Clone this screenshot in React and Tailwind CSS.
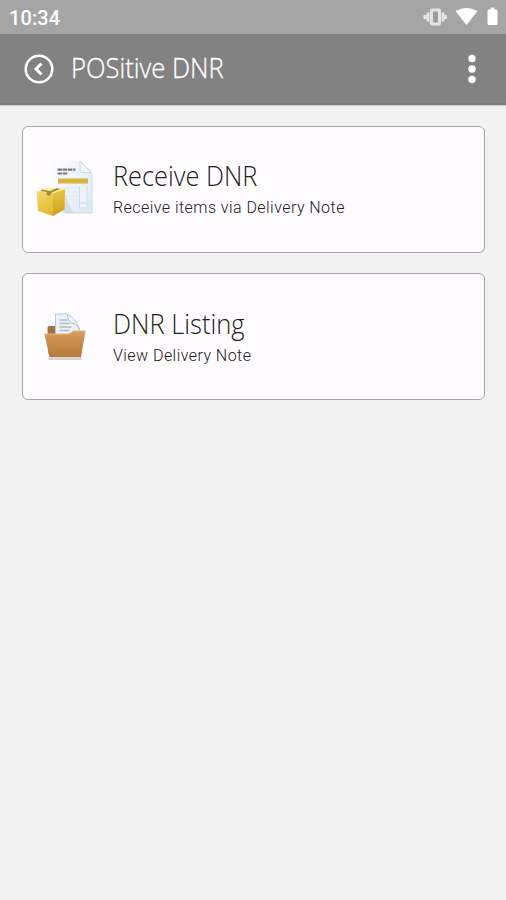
import React from "react";

function StatusBar() {
  return (
    <div className="flex h-[34px] items-center justify-between bg-[#a5a5a5] pl-[9px] pr-[7px] text-white">
      <span className="pt-px font-['Roboto',sans-serif] text-[20px] font-medium leading-6 tracking-[0.1px]">10:34</span>
      <svg width="76" height="22" viewBox="0 0 76 22" fill="none" className="-mt-px">
        <g fill="#e4e4e4">
          <rect x="7" y="2.500" width="11" height="17" rx="2" />
          <path d="M3.500 6.500H6.500v9H3.500zM18.500 6.500h3v9h-3zM.5 9h3v4H.5zM21.500 9h2.500v4h-2.500z" />
          <rect x="10" y="5.500" width="5" height="11" fill="#9c9c9c" />
        </g>
        <path d="M32.500 5Q43.500-1 54.500 5L43.500 19z" fill="white" />
        <path d="M67.500 1.500h4v2h1.500q1.500 0 1.500 1.500v12.500q0 1.500-1.500 1.500h-7q-1.500 0-1.500-1.500V5q0-1.500 1.500-1.500h1.500z" fill="white" />
      </svg>
    </div>
  );
}

function Header() {
  return (
    <header className="flex h-[71px] items-center border-b-2 border-[#7b7b7b] bg-[#828282] pl-6 pr-[29px] shadow-[0_1px_1px_#d0d0d0]">
      <svg width="30" height="30" viewBox="0 0 30 30" fill="none" stroke="white" className="shrink-0">
        <circle cx="15" cy="15" r="13.300" strokeWidth="2.500" />
        <path d="M17.500 9.500L12 15l5.500 5.500" strokeWidth="3" />
      </svg>
      <h1 className="mb-0.5 ml-[17px] flex-1 origin-left scale-x-[0.93] whitespace-nowrap font-['Open_Sans',sans-serif] text-[27.500px] font-light leading-9 text-white [-webkit-text-stroke:0.3px_white]">
        POSitive DNR
      </h1>
      <svg width="10" height="30" viewBox="0 0 10 30" fill="white" className="shrink-0">
        <circle cx="5" cy="4.500" r="3.700" />
        <circle cx="5" cy="15" r="3.700" />
        <circle cx="5" cy="25.500" r="3.700" />
      </svg>
    </header>
  );
}

function DeliveryIcon() {
  return (
    <svg width="60" height="60" viewBox="0 0 60 60">
      <defs>
        <linearGradient id="paper" x1="0" y1="0" x2="1" y2="1">
          <stop offset="0" stopColor="#fdfdfe" />
          <stop offset="1" stopColor="#dce9f3" />
        </linearGradient>
        <linearGradient id="box" x1="0" y1="0" x2="0.600" y2="1">
          <stop offset="0" stopColor="#f7dc72" />
          <stop offset="1" stopColor="#e0b526" />
        </linearGradient>
        <linearGradient id="side" x1="0" y1="0" x2="0" y2="1">
          <stop offset="0" stopColor="#e5bd35" />
          <stop offset="1" stopColor="#b98d10" />
        </linearGradient>
      </defs>
      <path d="M18 1h27l12 12v40H18z" fill="url(#paper)" stroke="#f0f4f7" strokeWidth="0.500" />
      <path d="M45 1v11l12 1z" fill="#f1f4f8" stroke="#cdd5dc" />
      <path d="M57 14v39H30" fill="none" stroke="#cbdbe7" />
      <path d="M22.500 9.700h18M22.500 13.500h10" stroke="#77797d" strokeWidth="2.200" strokeDasharray="4.500 0.700" />
      <rect x="23" y="18.500" width="30" height="5" fill="#d7b53b" />
      <path d="M24 28h19M24 32h19M29 36h14M31 40h12" stroke="#e6ebf0" />
      <path d="M44.500 26v22H52V26M44.500 43H52" fill="#edf3f7" stroke="#cddae4" />
      <path d="M30 34l8 19H28z" fill="#91a2ad" opacity="0.200" />
      <path d="M1.500 31L14 27.500l16 1.500-11 5z" fill="#fff0a1" />
      <path d="M1.500 31L18 33.500 30 29l-.5 20.500L18 56 3 51z" fill="url(#box)" />
      <path d="M18 33.500L30 29l-.5 20.500L18 56z" fill="url(#side)" opacity="0.450" />
      <path d="M7 29.500l8 1.500 7-3 3 1-9 4-1 3-3-1-.5-3-6-1z" fill="#a88c3b" />
    </svg>
  );
}

function FolderIcon() {
  return (
    <svg width="60" height="60" viewBox="0 0 60 60">
      <defs>
        <linearGradient id="folder" x1="0" y1="0" x2="0" y2="1">
          <stop offset="0" stopColor="#d5a15d" />
          <stop offset="0.500" stopColor="#c38a45" />
          <stop offset="1" stopColor="#b5783a" />
        </linearGradient>
      </defs>
      <g transform="translate(0.500 1)">
        <path d="M13 49h33v3H13z" fill="#b9b9b9" opacity="0.600" />
        <path d="M12 20q0-2 2-2h7v5h22v23H13z" fill="#a27240" />
        <path d="M20 6h11q10 4 13 16v8H20z" fill="#edf2f8" stroke="#bdc8d5" />
        <path d="M32 6q0 7 4 9 6 1 8 7" fill="#f7f9fc" stroke="#aebccc" />
        <path d="M24 12h8M24 15.500h10M24 19h12M24 22.500h10" stroke="#aebccd" strokeWidth="1.600" />
        <path d="M9 26h24q3-1 5-3h12l-4.500 26H14z" fill="url(#folder)" />
        <path d="M9 26h24q3-1 5-3h12" fill="none" stroke="#e0b77c" />
      </g>
    </svg>
  );
}

function MenuCard({ icon, title, subtitle, titleClass, contentClass }) {
  return (
    <section className="flex h-[127px] items-center rounded-[6px] border border-[#a5a5a5] bg-[#fefcfe] pl-3">
      <div className="shrink-0 pt-px">{icon}</div>
      <div className={`ml-[18px] min-w-0 ${contentClass}`}>
        <h2 className={`origin-left whitespace-nowrap font-['Open_Sans',sans-serif] text-[27px] font-light leading-[34px] text-[#202020] ${titleClass}`}>
          {title}
        </h2>
        <p className="mt-[3px] whitespace-nowrap font-['Roboto',sans-serif] text-[16px] font-light leading-6 tracking-[0.450px] text-[#202020]">
          {subtitle}
        </p>
      </div>
    </section>
  );
}

export default function App() {
  return (
    <div className="min-h-screen w-full bg-[#f2f2f2]">
      <StatusBar />
      <Header />
      <main className="flex flex-col gap-5 pl-[22px] pr-[21px] pt-[21px]">
        <MenuCard icon={<DeliveryIcon />} title="Receive DNR" subtitle="Receive items via Delivery Note" titleClass="scale-x-[0.94]" contentClass="mb-0" />
        <MenuCard icon={<FolderIcon />} title="DNR Listing" subtitle="View Delivery Note" titleClass="scale-x-[0.945]" contentClass="mt-0.5" />
      </main>
    </div>
  );
}
